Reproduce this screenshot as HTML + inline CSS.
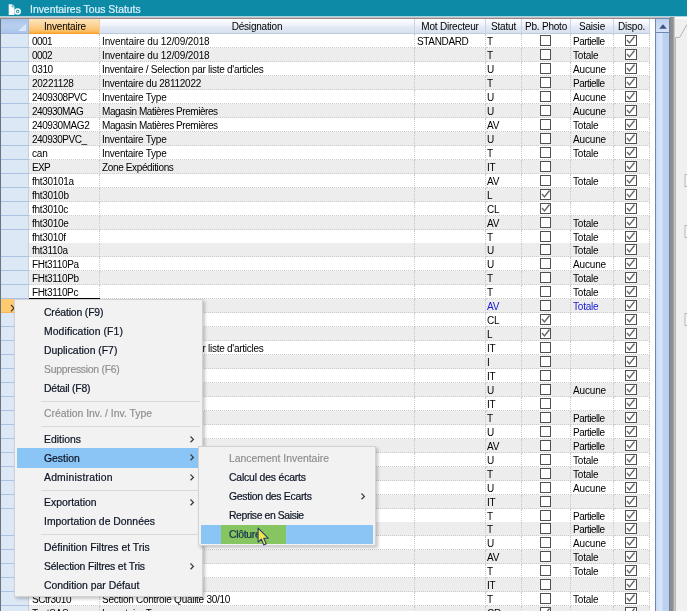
<!DOCTYPE html>
<html><head><meta charset="utf-8">
<style>
*{box-sizing:border-box;margin:0;padding:0}
html,body{width:687px;height:611px;overflow:hidden;background:#fff;font-family:"Liberation Sans",sans-serif;font-size:10px;color:#000}
#title{position:absolute;left:0;top:0;width:687px;height:17px;background:#0d8aa6;color:#dcf2fc;-webkit-text-stroke:0.2px #dcf2fc;font-size:10.4px;line-height:19px;padding-left:30px;white-space:nowrap;border-bottom:1px solid #a8d5e0}
#title svg{position:absolute;left:8px;top:3.5px}
#grid{position:absolute;left:0;top:17px;width:655px;height:594px;background:#fff;border-left:1px solid #69737b}
.hd{position:absolute;top:19px;height:15px;line-height:15px;text-align:center;font-size:10px;letter-spacing:-0.2px;background:linear-gradient(#fdfeff,#eff4fb 40%,#e2e9f5 60%,#d9e1ef);border-right:1px solid #c9d4e6;border-bottom:1px solid #bccbe0;color:#000;white-space:nowrap;overflow:hidden}
.row{position:absolute;left:0;width:650px;height:14px;}
.row .c{position:absolute;top:0;height:14px;line-height:15px;letter-spacing:-0.3px;white-space:nowrap;overflow:hidden;border-right:1px dotted #c8c8c8;border-bottom:1px dotted #cbcbcb;padding-left:3px;background:#fff}
.row.alt .c{background:#ededed}
.row .rs{left:1px;width:28px;background:#dde8f7 !important;border-right:1px solid #c6d0de !important;border-bottom:1px solid #adc2e4 !important;}
.row.sel .rs{background:#ffcb70 !important;border-bottom-color:#f5b85a !important}
.c1{left:29px;width:71px}
.c2{left:100px;width:315px}
.c3{left:415px;width:71px}
.c4{left:486px;width:36px}
.c5{left:522px;width:49px;padding-left:0 !important}
.c6{left:571px;width:43px}
.c7{left:614px;width:36px;padding-left:0 !important}
.row.sel .c{color:#1818d4}
.cb{position:absolute;left:50%;margin-left:-6px;top:1px;width:11px;height:11px;border:1px solid #505050;background:#fff}
.c7 .cb{margin-left:-7px;width:12px}
.c4{padding-left:1px !important}
.c2,.c3,.c6{padding-left:2px !important}
.cb svg{position:absolute;left:-1px;top:-1px}
#sb{position:absolute;left:655px;top:18px;width:15px;height:593px;background:linear-gradient(90deg,#c6daf5,#d4e3f9 25%,#d6e5fa 45%,#bdd2f0 55%,#b9cfee);border-left:1px solid #6f87b3;border-right:1px solid #74839f}
#sbb{position:absolute;left:655px;top:18px;width:15px;height:15px;background:linear-gradient(#bcd0ee,#d6e4f8);border:1px solid #6f87b3;border-right-color:#6f7f9d}
#rp{position:absolute;left:670px;top:17px;width:17px;height:594px;background:linear-gradient(90deg,#8a8a8a,#909090 3px,#b4b4b4 4px,#e0e0e0 5px,#f0f0f0 5.5px)}
.menu{position:absolute;background:#f2f2f2;border:1px solid #d2d2d2;box-shadow:2px 2px 3px rgba(0,0,0,.22);font-size:10.4px;color:#0c1424;-webkit-text-stroke:0.2px #0c1424}
.mi{position:absolute;left:2px;right:2px;height:19px;line-height:19px;white-space:nowrap;}
.mi span{position:absolute;left:27px}
.mi.dis{color:#8d8d8d;-webkit-text-stroke:0.15px #8d8d8d}
.mi.hl{background:#8bc5f6}
.sep{position:absolute;height:1px;background:#d9d9d9}
.arr{position:absolute;top:5.5px;width:5px;height:8px}
</style></head><body><div id="wrap" style="position:absolute;left:0;top:0;width:687px;height:611px;will-change:transform;overflow:hidden">
<div id="grid"></div>
<div class="row" style="top:34.20px"><div class="c rs"></div><div class="c c1"><span style="letter-spacing:-0.55px">0001</span></div><div class="c c2"><span style="letter-spacing:-0.13px">Inventaire du 12/09/2018</span></div><div class="c c3"><span style="letter-spacing:-0.35px">STANDARD</span></div><div class="c c4">T</div><div class="c c5"><span class="cb"></span></div><div class="c c6"><span style="letter-spacing:-0.50px">Partielle</span></div><div class="c c7"><span class="cb"><svg width="11" height="11" viewBox="0 0 11 11"><path d="M2 5 L4.5 8 L9.5 1.5" fill="none" stroke="#686868" stroke-width="1.4"/></svg></span></div></div>
<div class="row alt" style="top:48.15px"><div class="c rs"></div><div class="c c1"><span style="letter-spacing:-0.55px">0002</span></div><div class="c c2"><span style="letter-spacing:-0.13px">Inventaire du 12/09/2018</span></div><div class="c c3"></div><div class="c c4">T</div><div class="c c5"><span class="cb"></span></div><div class="c c6"><span style="letter-spacing:-0.20px">Totale</span></div><div class="c c7"><span class="cb"><svg width="11" height="11" viewBox="0 0 11 11"><path d="M2 5 L4.5 8 L9.5 1.5" fill="none" stroke="#686868" stroke-width="1.4"/></svg></span></div></div>
<div class="row" style="top:62.10px"><div class="c rs"></div><div class="c c1"><span style="letter-spacing:-0.36px">0310</span></div><div class="c c2"><span style="letter-spacing:-0.27px">Inventaire / Selection par liste d'articles</span></div><div class="c c3"></div><div class="c c4">U</div><div class="c c5"><span class="cb"></span></div><div class="c c6"><span style="letter-spacing:-0.15px">Aucune</span></div><div class="c c7"><span class="cb"><svg width="11" height="11" viewBox="0 0 11 11"><path d="M2 5 L4.5 8 L9.5 1.5" fill="none" stroke="#686868" stroke-width="1.4"/></svg></span></div></div>
<div class="row alt" style="top:76.05px"><div class="c rs"></div><div class="c c1"><span style="letter-spacing:-0.26px">20221128</span></div><div class="c c2"><span style="letter-spacing:-0.24px">Inventaire du 28112022</span></div><div class="c c3"></div><div class="c c4">T</div><div class="c c5"><span class="cb"></span></div><div class="c c6"><span style="letter-spacing:-0.50px">Partielle</span></div><div class="c c7"><span class="cb"><svg width="11" height="11" viewBox="0 0 11 11"><path d="M2 5 L4.5 8 L9.5 1.5" fill="none" stroke="#686868" stroke-width="1.4"/></svg></span></div></div>
<div class="row" style="top:90.00px"><div class="c rs"></div><div class="c c1"><span style="letter-spacing:-0.47px">2409308PVC</span></div><div class="c c2"><span style="letter-spacing:-0.25px">Inventaire Type</span></div><div class="c c3"></div><div class="c c4">U</div><div class="c c5"><span class="cb"></span></div><div class="c c6"><span style="letter-spacing:-0.15px">Aucune</span></div><div class="c c7"><span class="cb"><svg width="11" height="11" viewBox="0 0 11 11"><path d="M2 5 L4.5 8 L9.5 1.5" fill="none" stroke="#686868" stroke-width="1.4"/></svg></span></div></div>
<div class="row alt" style="top:103.95px"><div class="c rs"></div><div class="c c1"><span style="letter-spacing:-0.55px">240930MAG</span></div><div class="c c2"><span style="letter-spacing:-0.45px">Magasin Matières Premières</span></div><div class="c c3"></div><div class="c c4">U</div><div class="c c5"><span class="cb"></span></div><div class="c c6"><span style="letter-spacing:-0.15px">Aucune</span></div><div class="c c7"><span class="cb"><svg width="11" height="11" viewBox="0 0 11 11"><path d="M2 5 L4.5 8 L9.5 1.5" fill="none" stroke="#686868" stroke-width="1.4"/></svg></span></div></div>
<div class="row" style="top:117.90px"><div class="c rs"></div><div class="c c1"><span style="letter-spacing:-0.44px">240930MAG2</span></div><div class="c c2"><span style="letter-spacing:-0.45px">Magasin Matières Premières</span></div><div class="c c3"></div><div class="c c4">AV</div><div class="c c5"><span class="cb"></span></div><div class="c c6"><span style="letter-spacing:-0.20px">Totale</span></div><div class="c c7"><span class="cb"><svg width="11" height="11" viewBox="0 0 11 11"><path d="M2 5 L4.5 8 L9.5 1.5" fill="none" stroke="#686868" stroke-width="1.4"/></svg></span></div></div>
<div class="row alt" style="top:131.85px"><div class="c rs"></div><div class="c c1"><span style="letter-spacing:-0.50px">240930PVC_</span></div><div class="c c2"><span style="letter-spacing:-0.25px">Inventaire Type</span></div><div class="c c3"></div><div class="c c4">U</div><div class="c c5"><span class="cb"></span></div><div class="c c6"><span style="letter-spacing:-0.15px">Aucune</span></div><div class="c c7"><span class="cb"><svg width="11" height="11" viewBox="0 0 11 11"><path d="M2 5 L4.5 8 L9.5 1.5" fill="none" stroke="#686868" stroke-width="1.4"/></svg></span></div></div>
<div class="row" style="top:145.80px"><div class="c rs"></div><div class="c c1"><span style="letter-spacing:-0.20px">can</span></div><div class="c c2"><span style="letter-spacing:-0.25px">Inventaire Type</span></div><div class="c c3"></div><div class="c c4">T</div><div class="c c5"><span class="cb"></span></div><div class="c c6"><span style="letter-spacing:-0.20px">Totale</span></div><div class="c c7"><span class="cb"><svg width="11" height="11" viewBox="0 0 11 11"><path d="M2 5 L4.5 8 L9.5 1.5" fill="none" stroke="#686868" stroke-width="1.4"/></svg></span></div></div>
<div class="row alt" style="top:159.75px"><div class="c rs"></div><div class="c c1"><span style="letter-spacing:-0.63px">EXP</span></div><div class="c c2"><span style="letter-spacing:-0.36px">Zone Expéditions</span></div><div class="c c3"></div><div class="c c4">IT</div><div class="c c5"><span class="cb"></span></div><div class="c c6"></div><div class="c c7"><span class="cb"><svg width="11" height="11" viewBox="0 0 11 11"><path d="M2 5 L4.5 8 L9.5 1.5" fill="none" stroke="#686868" stroke-width="1.4"/></svg></span></div></div>
<div class="row" style="top:173.70px"><div class="c rs"></div><div class="c c1"><span style="letter-spacing:-0.31px">fht30101a</span></div><div class="c c2"></div><div class="c c3"></div><div class="c c4">AV</div><div class="c c5"><span class="cb"></span></div><div class="c c6"><span style="letter-spacing:-0.20px">Totale</span></div><div class="c c7"><span class="cb"><svg width="11" height="11" viewBox="0 0 11 11"><path d="M2 5 L4.5 8 L9.5 1.5" fill="none" stroke="#686868" stroke-width="1.4"/></svg></span></div></div>
<div class="row alt" style="top:187.65px"><div class="c rs"></div><div class="c c1"><span style="letter-spacing:-0.28px">fht3010b</span></div><div class="c c2"></div><div class="c c3"></div><div class="c c4">L</div><div class="c c5"><span class="cb"><svg width="11" height="11" viewBox="0 0 11 11"><path d="M2 5 L4.5 8 L9.5 1.5" fill="none" stroke="#686868" stroke-width="1.4"/></svg></span></div><div class="c c6"></div><div class="c c7"><span class="cb"><svg width="11" height="11" viewBox="0 0 11 11"><path d="M2 5 L4.5 8 L9.5 1.5" fill="none" stroke="#686868" stroke-width="1.4"/></svg></span></div></div>
<div class="row" style="top:201.60px"><div class="c rs"></div><div class="c c1"><span style="letter-spacing:-0.30px">fht3010c</span></div><div class="c c2"></div><div class="c c3"></div><div class="c c4">CL</div><div class="c c5"><span class="cb"><svg width="11" height="11" viewBox="0 0 11 11"><path d="M2 5 L4.5 8 L9.5 1.5" fill="none" stroke="#686868" stroke-width="1.4"/></svg></span></div><div class="c c6"></div><div class="c c7"><span class="cb"><svg width="11" height="11" viewBox="0 0 11 11"><path d="M2 5 L4.5 8 L9.5 1.5" fill="none" stroke="#686868" stroke-width="1.4"/></svg></span></div></div>
<div class="row alt" style="top:215.55px"><div class="c rs"></div><div class="c c1"><span style="letter-spacing:-0.30px">fht3010e</span></div><div class="c c2"></div><div class="c c3"></div><div class="c c4">AV</div><div class="c c5"><span class="cb"></span></div><div class="c c6"><span style="letter-spacing:-0.20px">Totale</span></div><div class="c c7"><span class="cb"><svg width="11" height="11" viewBox="0 0 11 11"><path d="M2 5 L4.5 8 L9.5 1.5" fill="none" stroke="#686868" stroke-width="1.4"/></svg></span></div></div>
<div class="row" style="top:229.50px"><div class="c rs"></div><div class="c c1"><span style="letter-spacing:-0.30px">fht3010f</span></div><div class="c c2"></div><div class="c c3"></div><div class="c c4">T</div><div class="c c5"><span class="cb"></span></div><div class="c c6"><span style="letter-spacing:-0.20px">Totale</span></div><div class="c c7"><span class="cb"><svg width="11" height="11" viewBox="0 0 11 11"><path d="M2 5 L4.5 8 L9.5 1.5" fill="none" stroke="#686868" stroke-width="1.4"/></svg></span></div></div>
<div class="row alt" style="top:243.45px"><div class="c rs"></div><div class="c c1"><span style="letter-spacing:-0.30px">fht3110a</span></div><div class="c c2"></div><div class="c c3"></div><div class="c c4">U</div><div class="c c5"><span class="cb"></span></div><div class="c c6"><span style="letter-spacing:-0.20px">Totale</span></div><div class="c c7"><span class="cb"><svg width="11" height="11" viewBox="0 0 11 11"><path d="M2 5 L4.5 8 L9.5 1.5" fill="none" stroke="#686868" stroke-width="1.4"/></svg></span></div></div>
<div class="row" style="top:257.40px"><div class="c rs"></div><div class="c c1"><span style="letter-spacing:-0.34px">FHt3110Pa</span></div><div class="c c2"></div><div class="c c3"></div><div class="c c4">U</div><div class="c c5"><span class="cb"></span></div><div class="c c6"><span style="letter-spacing:-0.15px">Aucune</span></div><div class="c c7"><span class="cb"><svg width="11" height="11" viewBox="0 0 11 11"><path d="M2 5 L4.5 8 L9.5 1.5" fill="none" stroke="#686868" stroke-width="1.4"/></svg></span></div></div>
<div class="row alt" style="top:271.35px"><div class="c rs"></div><div class="c c1"><span style="letter-spacing:-0.34px">FHt3110Pb</span></div><div class="c c2"></div><div class="c c3"></div><div class="c c4">T</div><div class="c c5"><span class="cb"></span></div><div class="c c6"><span style="letter-spacing:-0.20px">Totale</span></div><div class="c c7"><span class="cb"><svg width="11" height="11" viewBox="0 0 11 11"><path d="M2 5 L4.5 8 L9.5 1.5" fill="none" stroke="#686868" stroke-width="1.4"/></svg></span></div></div>
<div class="row" style="top:285.30px"><div class="c rs"></div><div class="c c1"><span style="letter-spacing:-0.36px">FHt3110Pc</span></div><div class="c c2"></div><div class="c c3"></div><div class="c c4">T</div><div class="c c5"><span class="cb"></span></div><div class="c c6"><span style="letter-spacing:-0.20px">Totale</span></div><div class="c c7"><span class="cb"><svg width="11" height="11" viewBox="0 0 11 11"><path d="M2 5 L4.5 8 L9.5 1.5" fill="none" stroke="#686868" stroke-width="1.4"/></svg></span></div></div>
<div class="row alt sel" style="top:299.25px"><div class="c rs"></div><div class="c c1"></div><div class="c c2"></div><div class="c c3"></div><div class="c c4">AV</div><div class="c c5"><span class="cb"></span></div><div class="c c6"><span style="letter-spacing:-0.20px">Totale</span></div><div class="c c7"><span class="cb"><svg width="11" height="11" viewBox="0 0 11 11"><path d="M2 5 L4.5 8 L9.5 1.5" fill="none" stroke="#686868" stroke-width="1.4"/></svg></span></div></div>
<div class="row" style="top:313.20px"><div class="c rs"></div><div class="c c1"></div><div class="c c2"></div><div class="c c3"></div><div class="c c4">CL</div><div class="c c5"><span class="cb"><svg width="11" height="11" viewBox="0 0 11 11"><path d="M2 5 L4.5 8 L9.5 1.5" fill="none" stroke="#686868" stroke-width="1.4"/></svg></span></div><div class="c c6"></div><div class="c c7"><span class="cb"><svg width="11" height="11" viewBox="0 0 11 11"><path d="M2 5 L4.5 8 L9.5 1.5" fill="none" stroke="#686868" stroke-width="1.4"/></svg></span></div></div>
<div class="row alt" style="top:327.15px"><div class="c rs"></div><div class="c c1"></div><div class="c c2"></div><div class="c c3"></div><div class="c c4">L</div><div class="c c5"><span class="cb"><svg width="11" height="11" viewBox="0 0 11 11"><path d="M2 5 L4.5 8 L9.5 1.5" fill="none" stroke="#686868" stroke-width="1.4"/></svg></span></div><div class="c c6"></div><div class="c c7"><span class="cb"><svg width="11" height="11" viewBox="0 0 11 11"><path d="M2 5 L4.5 8 L9.5 1.5" fill="none" stroke="#686868" stroke-width="1.4"/></svg></span></div></div>
<div class="row" style="top:341.10px"><div class="c rs"></div><div class="c c1"></div><div class="c c2"><span style="letter-spacing:-0.27px">Inventaire / Selection par liste d'articles</span></div><div class="c c3"></div><div class="c c4">IT</div><div class="c c5"><span class="cb"></span></div><div class="c c6"></div><div class="c c7"><span class="cb"><svg width="11" height="11" viewBox="0 0 11 11"><path d="M2 5 L4.5 8 L9.5 1.5" fill="none" stroke="#686868" stroke-width="1.4"/></svg></span></div></div>
<div class="row alt" style="top:355.05px"><div class="c rs"></div><div class="c c1"></div><div class="c c2"></div><div class="c c3"></div><div class="c c4">I</div><div class="c c5"><span class="cb"></span></div><div class="c c6"></div><div class="c c7"><span class="cb"><svg width="11" height="11" viewBox="0 0 11 11"><path d="M2 5 L4.5 8 L9.5 1.5" fill="none" stroke="#686868" stroke-width="1.4"/></svg></span></div></div>
<div class="row" style="top:369.00px"><div class="c rs"></div><div class="c c1"></div><div class="c c2"></div><div class="c c3"></div><div class="c c4">IT</div><div class="c c5"><span class="cb"></span></div><div class="c c6"></div><div class="c c7"><span class="cb"><svg width="11" height="11" viewBox="0 0 11 11"><path d="M2 5 L4.5 8 L9.5 1.5" fill="none" stroke="#686868" stroke-width="1.4"/></svg></span></div></div>
<div class="row alt" style="top:382.95px"><div class="c rs"></div><div class="c c1"></div><div class="c c2"></div><div class="c c3"></div><div class="c c4">U</div><div class="c c5"><span class="cb"></span></div><div class="c c6"><span style="letter-spacing:-0.15px">Aucune</span></div><div class="c c7"><span class="cb"><svg width="11" height="11" viewBox="0 0 11 11"><path d="M2 5 L4.5 8 L9.5 1.5" fill="none" stroke="#686868" stroke-width="1.4"/></svg></span></div></div>
<div class="row" style="top:396.90px"><div class="c rs"></div><div class="c c1"></div><div class="c c2"></div><div class="c c3"></div><div class="c c4">IT</div><div class="c c5"><span class="cb"></span></div><div class="c c6"></div><div class="c c7"><span class="cb"><svg width="11" height="11" viewBox="0 0 11 11"><path d="M2 5 L4.5 8 L9.5 1.5" fill="none" stroke="#686868" stroke-width="1.4"/></svg></span></div></div>
<div class="row alt" style="top:410.85px"><div class="c rs"></div><div class="c c1"></div><div class="c c2"></div><div class="c c3"></div><div class="c c4">T</div><div class="c c5"><span class="cb"></span></div><div class="c c6"><span style="letter-spacing:-0.50px">Partielle</span></div><div class="c c7"><span class="cb"><svg width="11" height="11" viewBox="0 0 11 11"><path d="M2 5 L4.5 8 L9.5 1.5" fill="none" stroke="#686868" stroke-width="1.4"/></svg></span></div></div>
<div class="row" style="top:424.80px"><div class="c rs"></div><div class="c c1"></div><div class="c c2"></div><div class="c c3"></div><div class="c c4">U</div><div class="c c5"><span class="cb"></span></div><div class="c c6"><span style="letter-spacing:-0.50px">Partielle</span></div><div class="c c7"><span class="cb"><svg width="11" height="11" viewBox="0 0 11 11"><path d="M2 5 L4.5 8 L9.5 1.5" fill="none" stroke="#686868" stroke-width="1.4"/></svg></span></div></div>
<div class="row alt" style="top:438.75px"><div class="c rs"></div><div class="c c1"></div><div class="c c2"></div><div class="c c3"></div><div class="c c4">AV</div><div class="c c5"><span class="cb"></span></div><div class="c c6"><span style="letter-spacing:-0.50px">Partielle</span></div><div class="c c7"><span class="cb"><svg width="11" height="11" viewBox="0 0 11 11"><path d="M2 5 L4.5 8 L9.5 1.5" fill="none" stroke="#686868" stroke-width="1.4"/></svg></span></div></div>
<div class="row" style="top:452.70px"><div class="c rs"></div><div class="c c1"></div><div class="c c2"></div><div class="c c3"></div><div class="c c4">U</div><div class="c c5"><span class="cb"></span></div><div class="c c6"><span style="letter-spacing:-0.20px">Totale</span></div><div class="c c7"><span class="cb"><svg width="11" height="11" viewBox="0 0 11 11"><path d="M2 5 L4.5 8 L9.5 1.5" fill="none" stroke="#686868" stroke-width="1.4"/></svg></span></div></div>
<div class="row alt" style="top:466.65px"><div class="c rs"></div><div class="c c1"></div><div class="c c2"></div><div class="c c3"></div><div class="c c4">T</div><div class="c c5"><span class="cb"></span></div><div class="c c6"><span style="letter-spacing:-0.20px">Totale</span></div><div class="c c7"><span class="cb"><svg width="11" height="11" viewBox="0 0 11 11"><path d="M2 5 L4.5 8 L9.5 1.5" fill="none" stroke="#686868" stroke-width="1.4"/></svg></span></div></div>
<div class="row" style="top:480.60px"><div class="c rs"></div><div class="c c1"></div><div class="c c2"></div><div class="c c3"></div><div class="c c4">U</div><div class="c c5"><span class="cb"></span></div><div class="c c6"><span style="letter-spacing:-0.15px">Aucune</span></div><div class="c c7"><span class="cb"><svg width="11" height="11" viewBox="0 0 11 11"><path d="M2 5 L4.5 8 L9.5 1.5" fill="none" stroke="#686868" stroke-width="1.4"/></svg></span></div></div>
<div class="row alt" style="top:494.55px"><div class="c rs"></div><div class="c c1"></div><div class="c c2"></div><div class="c c3"></div><div class="c c4">IT</div><div class="c c5"><span class="cb"></span></div><div class="c c6"></div><div class="c c7"><span class="cb"><svg width="11" height="11" viewBox="0 0 11 11"><path d="M2 5 L4.5 8 L9.5 1.5" fill="none" stroke="#686868" stroke-width="1.4"/></svg></span></div></div>
<div class="row" style="top:508.50px"><div class="c rs"></div><div class="c c1"></div><div class="c c2"></div><div class="c c3"></div><div class="c c4">T</div><div class="c c5"><span class="cb"></span></div><div class="c c6"><span style="letter-spacing:-0.50px">Partielle</span></div><div class="c c7"><span class="cb"><svg width="11" height="11" viewBox="0 0 11 11"><path d="M2 5 L4.5 8 L9.5 1.5" fill="none" stroke="#686868" stroke-width="1.4"/></svg></span></div></div>
<div class="row alt" style="top:522.45px"><div class="c rs"></div><div class="c c1"></div><div class="c c2"></div><div class="c c3"></div><div class="c c4">T</div><div class="c c5"><span class="cb"></span></div><div class="c c6"><span style="letter-spacing:-0.50px">Partielle</span></div><div class="c c7"><span class="cb"><svg width="11" height="11" viewBox="0 0 11 11"><path d="M2 5 L4.5 8 L9.5 1.5" fill="none" stroke="#686868" stroke-width="1.4"/></svg></span></div></div>
<div class="row" style="top:536.40px"><div class="c rs"></div><div class="c c1"></div><div class="c c2"></div><div class="c c3"></div><div class="c c4">U</div><div class="c c5"><span class="cb"></span></div><div class="c c6"><span style="letter-spacing:-0.15px">Aucune</span></div><div class="c c7"><span class="cb"><svg width="11" height="11" viewBox="0 0 11 11"><path d="M2 5 L4.5 8 L9.5 1.5" fill="none" stroke="#686868" stroke-width="1.4"/></svg></span></div></div>
<div class="row alt" style="top:550.35px"><div class="c rs"></div><div class="c c1"></div><div class="c c2"></div><div class="c c3"></div><div class="c c4">AV</div><div class="c c5"><span class="cb"></span></div><div class="c c6"><span style="letter-spacing:-0.20px">Totale</span></div><div class="c c7"><span class="cb"><svg width="11" height="11" viewBox="0 0 11 11"><path d="M2 5 L4.5 8 L9.5 1.5" fill="none" stroke="#686868" stroke-width="1.4"/></svg></span></div></div>
<div class="row" style="top:564.30px"><div class="c rs"></div><div class="c c1"></div><div class="c c2"></div><div class="c c3"></div><div class="c c4">T</div><div class="c c5"><span class="cb"></span></div><div class="c c6"><span style="letter-spacing:-0.20px">Totale</span></div><div class="c c7"><span class="cb"><svg width="11" height="11" viewBox="0 0 11 11"><path d="M2 5 L4.5 8 L9.5 1.5" fill="none" stroke="#686868" stroke-width="1.4"/></svg></span></div></div>
<div class="row alt" style="top:578.25px"><div class="c rs"></div><div class="c c1"></div><div class="c c2"></div><div class="c c3"></div><div class="c c4">IT</div><div class="c c5"><span class="cb"></span></div><div class="c c6"></div><div class="c c7"><span class="cb"><svg width="11" height="11" viewBox="0 0 11 11"><path d="M2 5 L4.5 8 L9.5 1.5" fill="none" stroke="#686868" stroke-width="1.4"/></svg></span></div></div>
<div class="row" style="top:592.20px"><div class="c rs"></div><div class="c c1"><span style="letter-spacing:-0.40px">SCtr3010</span></div><div class="c c2"><span style="letter-spacing:-0.27px">Section Controle Qualité 30/10</span></div><div class="c c3"></div><div class="c c4">T</div><div class="c c5"><span class="cb"></span></div><div class="c c6"><span style="letter-spacing:-0.20px">Totale</span></div><div class="c c7"><span class="cb"><svg width="11" height="11" viewBox="0 0 11 11"><path d="M2 5 L4.5 8 L9.5 1.5" fill="none" stroke="#686868" stroke-width="1.4"/></svg></span></div></div>
<div class="row alt" style="top:606.15px"><div class="c rs"></div><div class="c c1">TestSAS</div><div class="c c2"><span style="letter-spacing:-0.25px">Inventaire Type</span></div><div class="c c3"></div><div class="c c4">CR</div><div class="c c5"><span class="cb"><svg width="11" height="11" viewBox="0 0 11 11"><path d="M2 5 L4.5 8 L9.5 1.5" fill="none" stroke="#686868" stroke-width="1.4"/></svg></span></div><div class="c c6"></div><div class="c c7"><span class="cb"><svg width="11" height="11" viewBox="0 0 11 11"><path d="M2 5 L4.5 8 L9.5 1.5" fill="none" stroke="#686868" stroke-width="1.4"/></svg></span></div></div>
<div class="hd" style="left:1px;width:28px;background:linear-gradient(#a9c3eb,#b9cff0 50%,#aac4ec);border-right-color:#9fb7de;border-bottom-color:#9fb7de"><svg width="8" height="7" style="position:absolute;left:17px;top:5px"><path d="M0 7 L8 7 L8 0 Z" fill="#dce7f7"/></svg></div>
<div class="hd" style="left:29px;width:71px;background:linear-gradient(#fde4b8,#fcd69c 40%,#fbc87a 70%,#fbbd5e 88%,#f8a936);border-right-color:#f7cf95;border-bottom-color:#f5a22e;padding-left:2px">Inventaire</div>
<div class="hd" style="left:100px;width:315px">Désignation</div>
<div class="hd" style="left:415px;width:71px">Mot Directeur</div>
<div class="hd" style="left:486px;width:36px">Statut</div>
<div class="hd" style="left:522px;width:49px">Pb. Photo</div>
<div class="hd" style="left:571px;width:43px">Saisie</div>
<div class="hd" style="left:614px;width:36px">Dispo.</div>
<div style="position:absolute;left:0;top:17px;width:670px;height:1px;background:#c9c0c2"></div><div style="position:absolute;left:0;top:18px;width:670px;height:1px;background:#988a8c"></div>
<div style="position:absolute;left:29px;top:298px;width:71px;height:1px;background:#000"></div>
<svg width="6" height="9" style="position:absolute;left:9.5px;top:303.5px"><path d="M1 1 L4 4.2 L1 7.4" fill="none" stroke="#3c3220" stroke-width="1.1"/></svg>
<div id="sb"></div>
<div id="sbb"><svg width="9" height="6" style="position:absolute;left:2.5px;top:4.5px"><path d="M0.2 4.8 L4 0.2 L7.8 4.8 Z" fill="#3b4f7c"/></svg></div>
<div id="rp"><div style="position:absolute;left:5px;top:0;width:13px;height:3px;background:linear-gradient(#fff,#f0f0f0)"></div>
<svg width="17" height="594" style="position:absolute;left:0;top:0"><path d="M17 7.4 L9.6 20.5 L5.5 20.5 L5.5 594" fill="#f0f0f0" stroke="#b4b4b4" stroke-width="1"/><path d="M0 0 H17 V5 L10.5 20.5 H5 V0Z" fill="#fafafa" stroke="none" opacity="0"/>
<rect x="15" y="157.5" width="5" height="12" fill="#f6f6f6" stroke="#b8b8b8"/>
<rect x="15" y="208.5" width="5" height="12" fill="#f6f6f6" stroke="#b8b8b8"/>
<rect x="15" y="296.5" width="5" height="12" fill="#f6f6f6" stroke="#b8b8b8"/>
</svg>
</div>
<div id="title"><svg width="14" height="12" viewBox="0 0 14 12"><path d="M0.7 0.3 H4.4 L6.5 2.6 V10.9 H0.7 Z" fill="#fff"/><path d="M4.2 0.3 V2.9 H6.5" fill="none" stroke="#0d8aa6" stroke-width="0.7"/><circle cx="9.7" cy="7.6" r="2.5" fill="#0d8aa6" stroke="#fff" stroke-width="1.5"/><circle cx="9.7" cy="7.7" r="0.9" fill="#fff"/></svg>Inventaires Tous Statuts</div>

<div class="menu" id="m1" style="left:14px;top:299px;width:189px;height:298px">
<div class="mi" style="top:2.5px"><span style="letter-spacing:-0.146px">Création (F9)</span></div>
<div class="mi" style="top:21.5px"><span style="letter-spacing:0.094px">Modification (F1)</span></div>
<div class="mi" style="top:40.5px"><span>Duplication (F7)</span></div>
<div class="mi dis" style="top:60px"><span style="letter-spacing:-0.263px">Suppression (F6)</span></div>
<div class="mi" style="top:79px"><span style="letter-spacing:-0.200px">Détail (F8)</span></div>
<div class="sep" style="left:26px;right:2px;top:101px"></div>
<div class="mi dis" style="top:104px"><span>Création Inv. / Inv. Type</span></div>
<div class="sep" style="left:26px;right:2px;top:126px"></div>
<div class="mi" style="top:130px"><span>Editions</span><svg class="arr" style="left:173px"><path d="M0.5 0.5 L3.4 3.4 L0.5 6.3" fill="none" stroke="#3a3a3a" stroke-width="1.25"/></svg></div>
<div class="mi hl" style="top:148px;height:20px;line-height:21px"><span>Gestion</span><svg class="arr" style="left:173px"><path d="M0.5 0.5 L3.4 3.4 L0.5 6.3" fill="none" stroke="#3a3a3a" stroke-width="1.25"/></svg></div>
<div class="mi" style="top:168px"><span style="letter-spacing:0.207px">Administration</span><svg class="arr" style="left:173px"><path d="M0.5 0.5 L3.4 3.4 L0.5 6.3" fill="none" stroke="#3a3a3a" stroke-width="1.25"/></svg></div>
<div class="sep" style="left:26px;right:2px;top:190px"></div>
<div class="mi" style="top:193px"><span>Exportation</span><svg class="arr" style="left:173px"><path d="M0.5 0.5 L3.4 3.4 L0.5 6.3" fill="none" stroke="#3a3a3a" stroke-width="1.25"/></svg></div>
<div class="mi" style="top:212px"><span>Importation de Données</span></div>
<div class="sep" style="left:26px;right:2px;top:234px"></div>
<div class="mi" style="top:238px"><span>Définition Filtres et Tris</span></div>
<div class="mi" style="top:257px"><span style="letter-spacing:-0.168px">Sélection Filtres et Tris</span><svg class="arr" style="left:173px"><path d="M0.5 0.5 L3.4 3.4 L0.5 6.3" fill="none" stroke="#3a3a3a" stroke-width="1.25"/></svg></div>
<div class="mi" style="top:276px"><span>Condition par Défaut</span></div>
</div>
<div class="menu" id="m2" style="left:198px;top:446px;width:178px;height:100px">
<div class="mi dis" style="top:2px"><span style="left:28px">Lancement Inventaire</span></div>
<div class="mi" style="top:21px"><span style="left:28px;letter-spacing:-0.171px">Calcul des écarts</span></div>
<div class="mi" style="top:40px"><span style="left:28px;letter-spacing:-0.289px">Gestion des Ecarts</span><svg class="arr" style="left:160px"><path d="M0.5 0.5 L3.4 3.4 L0.5 6.3" fill="none" stroke="#3a3a3a" stroke-width="1.25"/></svg></div>
<div class="mi" style="top:59px"><span style="left:28px;letter-spacing:-0.394px">Reprise en Saisie</span></div>
<div class="mi hl" style="top:78px;height:19px;line-height:20px"><div style="position:absolute;left:20px;top:0;width:65px;height:19px;background:#86c55f"></div><span style="left:28px;color:#173a5e;letter-spacing:-0.3px">Clôture</span></div>
</div>
<svg width="14" height="20.5" viewBox="0 0 13 19" style="position:absolute;left:256.9px;top:526.9px"><path d="M1 1 L1 14 L4 11.2 L6.3 16.6 L8.6 15.6 L6.3 10.4 L10.4 10.4 Z" fill="#e9e84c" stroke="#2a3a6a" stroke-width="1" stroke-linejoin="round"/></svg>
</div></body></html>
